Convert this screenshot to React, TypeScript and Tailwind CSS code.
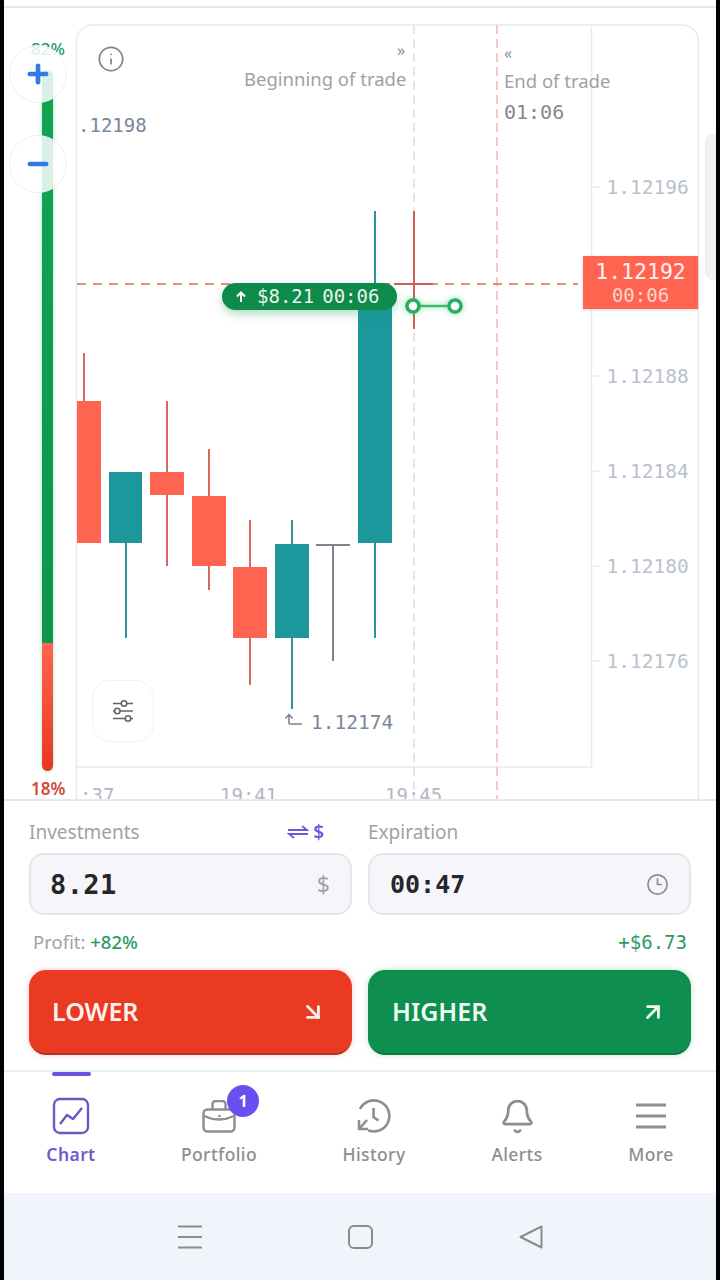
import { ArrowDownRight, ArrowUpRight, Bell, Clock3, Info, Plus, Minus } from "lucide-react";

const RED = "#ff6450";
const TEAL = "#1c979c";

// x, width, body top, body bottom, wick x, wick top, wick bottom
const candles = [
  { x: 77, w: 24, top: 401, bottom: 543, wx: 84, wt: 353, wb: 401, color: RED, wick: "#d9685a" },
  { x: 109, w: 33, top: 472, bottom: 543, wx: 126, wt: 543, wb: 638, color: TEAL, wick: "#2d9599" },
  { x: 150, w: 34, top: 472, bottom: 495, wx: 167, wt: 401, wb: 566, color: RED, wick: "#d9685a" },
  { x: 192, w: 34, top: 496, bottom: 566, wx: 209, wt: 449, wb: 590, color: RED, wick: "#d9685a" },
  { x: 233, w: 34, top: 567, bottom: 638, wx: 250, wt: 520, wb: 685, color: RED, wick: "#d9685a" },
  { x: 275, w: 34, top: 544, bottom: 638, wx: 292, wt: 520, wb: 709, color: TEAL, wick: "#2d9599" },
  { x: 358, w: 34, top: 300, bottom: 543, wx: 375, wt: 211, wb: 638, color: TEAL, wick: "#2d9599" },
];

const axisLabels = [
  { label: "1.12196", top: "top-[178px]" },
  { label: "1.12188", top: "top-[367px]" },
  { label: "1.12184", top: "top-[462px]" },
  { label: "1.12180", top: "top-[557px]" },
  { label: "1.12176", top: "top-[652px]" },
];

const sans = "font-['Noto_Sans',sans-serif]";
const mono = "font-['DejaVu_Sans_Mono',monospace]";

function ChartDrawing() {
  return (
    <svg className="absolute inset-0" width="720" height="800" viewBox="0 0 720 800" fill="none">
      <path d="M76.5 800V41a16 16 0 0 1 16-16h590a16 16 0 0 1 16 16V800" stroke="#e8e9ee" strokeWidth="1.5" />
      <path d="M591.5 25V767H77" stroke="#e9ebf1" strokeWidth="1.5" />
      {[187, 376, 471, 566, 661].map((y) => (
        <path key={y} d={`M592 ${y}h8`} stroke="#e9ebf1" strokeWidth="1.5" />
      ))}
      <path d="M414 25V800" stroke="#e6d9d9" strokeWidth="1.5" strokeDasharray="9 5" />
      <path d="M497 25V800" stroke="#f5b5ad" strokeWidth="1.5" strokeDasharray="9 5" />
      <path d="M77 284H578" stroke="#e2685a" strokeWidth="1.5" strokeDasharray="9 7" />
      {candles.map((c) => (
        <g key={c.x}>
          <path d={`M${c.wx} ${c.wt}V${c.wb}`} stroke={c.wick} strokeWidth="2" />
          <rect x={c.x} y={c.top} width={c.w} height={c.bottom - c.top} fill={c.color} />
        </g>
      ))}
      <path d="M316 545H350M333 545V661" stroke="#7f858f" strokeWidth="2" />
      <path d="M394 284H433M414 211V329" stroke="#d15f52" strokeWidth="2" />
      <g className="drop-shadow-[0_0_3px_rgba(60,200,120,0.6)]">
        <path d="M413 306H455" stroke="#3dbb6e" strokeWidth="2.5" />
        <circle cx="413" cy="306" r="6" fill="#fff" stroke="#27ae60" strokeWidth="3.5" />
        <circle cx="455" cy="306" r="6" fill="#fff" stroke="#27ae60" strokeWidth="3.5" />
      </g>
      <path d="M289 724V715M285.500 718.500L289 714.500L292.500 718.500M289 724H302" stroke="#7a8599" strokeWidth="1.6" />
    </svg>
  );
}

function SliderIcon() {
  return (
    <svg width="22" height="24" viewBox="0 0 22 24" fill="none" stroke="#5f6368" strokeWidth="1.6">
      <path d="M1 4.500H9M15 4.500H21M1 12H2.500M8 12H21M1 19.500H13M19 19.500H21" />
      <circle cx="12" cy="4.500" r="2.700" />
      <circle cx="5.300" cy="12" r="2.700" />
      <circle cx="16" cy="19.500" r="2.700" />
    </svg>
  );
}

function Chart() {
  return (
    <div className="relative h-[801px] w-full overflow-hidden border-b-2 border-[#e8e9ee]">
      <div className="absolute left-0 right-0 top-[6px] h-[2px] bg-[#e6e7ea]" />
      <ChartDrawing />

      {/* sentiment bar */}
      <div className="absolute left-[42px] top-[70px] flex h-[701px] w-[11px] flex-col overflow-hidden rounded-full shadow-[0_0_4px_rgba(60,220,130,0.5)]">
        <div className="h-[573px] bg-gradient-to-b from-[#12a453] to-[#0f954c]" />
        <div className="flex-1 bg-gradient-to-b from-[#ff6450] to-[#e8351f]" />
      </div>
      <span className={`absolute left-[31px] top-[40px] text-[17px] leading-none font-medium text-[#249a60] ${sans}`}>82%</span>
      <span className={`absolute left-[31px] top-[780px] text-[17px] leading-none font-semibold text-[#d6483b] ${sans}`}>18%</span>

      <button className="absolute left-[9px] top-[45px] flex h-[58px] w-[58px] items-center justify-center rounded-full border border-[#eef0f0] bg-white/85">
        <Plus size={28} strokeWidth={4} color="#2f7be8" />
      </button>
      <button className="absolute left-[9px] top-[135px] flex h-[58px] w-[58px] items-center justify-center rounded-full border border-[#eef0f0] bg-white/85">
        <Minus size={28} strokeWidth={4} color="#2f7be8" />
      </button>

      <Info className="absolute left-[97px] top-[45px]" size={28} strokeWidth={1.5} color="#858585" />

      <span className={`absolute left-[397px] top-[42px] text-[16px] leading-none text-[#8c8f96] ${sans}`}>»</span>
      <span className={`absolute left-[244px] top-[68px] text-[18.500px] leading-[22px] whitespace-nowrap text-[#9ea1a6] ${sans}`}>Beginning of trade</span>
      <span className={`absolute left-[504px] top-[45px] text-[16px] leading-none text-[#8c8f96] ${sans}`}>«</span>
      <span className={`absolute left-[504px] top-[70px] text-[18.500px] leading-[22px] whitespace-nowrap text-[#9ea1a6] ${sans}`}>End of trade</span>
      <span className={`absolute left-[504px] top-[102px] text-[20px] leading-none text-[#85888f] ${mono}`}>01:06</span>
      <span className={`absolute left-[78px] top-[116px] text-[19px] leading-none text-[#7b869a] ${mono}`}>.12198</span>

      {axisLabels.map((a) => (
        <span key={a.label} className={`absolute left-[606.500px] ${a.top} text-[19.500px] leading-none text-[#b9c1ce] ${mono}`}>{a.label}</span>
      ))}

      <span className={`absolute left-[311px] top-[713px] text-[19.500px] leading-none text-[#7b869a] ${mono}`}>1.12174</span>

      <div className={`absolute left-[80px] top-[786px] text-[19px] leading-none text-[#b2b8c4] ${mono}`}>:37</div>
      <div className={`absolute left-[220px] top-[786px] text-[19px] leading-none text-[#b2b8c4] ${mono}`}>19:41</div>
      <div className={`absolute left-[385px] top-[786px] text-[19px] leading-none text-[#b2b8c4] ${mono}`}>19:45</div>

      <button className="absolute left-[92px] top-[680px] flex h-[62px] w-[62px] items-center justify-center rounded-[18px] border border-[#f0f1f3] bg-white">
        <SliderIcon />
      </button>

      {/* open trade pill */}
      <div className={`absolute left-[222px] top-[283px] flex h-[27px] w-[175px] items-center rounded-full bg-[#0f8a4b] pl-[13px] text-[19px] leading-none whitespace-nowrap text-[#e6f5ec] shadow-[0_4px_10px_rgba(16,160,90,0.35)] ${mono}`}>
        <svg width="12" height="12" viewBox="0 0 12 12" fill="none" stroke="#fff" strokeWidth="2" className="mr-[10px]">
          <path d="M6 11V2M2 5.500L6 1.500L10 5.500" />
        </svg>
        <span>$8.21</span>
        <span className="ml-[8px]">00:06</span>
      </div>

      {/* current price */}
      <div className={`absolute left-[583px] top-[256px] flex h-[53px] w-[115px] flex-col items-center justify-center bg-[#ff6450] shadow-[0_1px_3px_rgba(0,0,0,0.15)] ${mono}`}>
        <span className="text-[21.500px] leading-[25px] text-[#fff1ee]">1.12192</span>
        <span className="text-[19px] leading-[22px] text-[#ffd5cd]">00:06</span>
      </div>

      <div className="absolute left-[705px] top-[134px] h-[146px] w-[11px] rounded-l-[9px] border border-r-0 border-[#e9e9ec] bg-[#f2f2f3]" />
    </div>
  );
}

function SwapIcon() {
  return (
    <svg width="22" height="14" viewBox="0 0 22 14" fill="none" stroke="#6d5ad6" strokeWidth="1.8">
      <path d="M1 5H20L15 1" />
      <path d="M21 9H2L7 13" />
    </svg>
  );
}

function Form() {
  return (
    <div className="pl-[25px] pt-[19px]">
      <div className="grid grid-cols-[323px_323px] gap-x-[16px]">
        <div className="flex h-[24px] items-center justify-between pr-[28px]">
          <span className={`text-[19px] leading-none text-[#a0a2a8] ${sans}`}>Investments</span>
          <span className="flex items-center gap-[4px]">
            <SwapIcon />
            <span className={`text-[19px] leading-none font-semibold text-[#6d5ad6] ${sans}`}>$</span>
          </span>
        </div>
        <div className="flex h-[24px] items-center">
          <span className={`text-[19px] leading-none text-[#a0a2a8] ${sans}`}>Expiration</span>
        </div>

        <div className="mt-[9px] flex h-[62px] items-center justify-between rounded-[15px] border-2 border-[#e5e5ea] bg-[#f6f6fa] pl-[19px] pr-[20px]">
          <span className={`text-[27px] leading-none font-bold tracking-[0.4px] text-[#25272b] ${mono}`}>8.21</span>
          <span className={`text-[23px] leading-none text-[#a0a2a8] ${sans}`}>$</span>
        </div>
        <div className="mt-[9px] flex h-[62px] items-center justify-between rounded-[15px] border-2 border-[#e5e5ea] bg-[#f6f6fa] pl-[20px] pr-[20px]">
          <span className={`text-[25px] leading-none font-bold text-[#25272b] ${mono}`}>00:47</span>
          <Clock3 size={23} strokeWidth={1.8} color="#8d8f93" />
        </div>

        <div className={`mt-[15px] flex h-[24px] items-center pl-[4px] text-[18.500px] leading-none text-[#a0a2a8] ${sans}`}>
          Profit:&nbsp;<span className="font-medium text-[#2c9a5f]">+82%</span>
        </div>
        <div className="mt-[15px] flex h-[24px] items-center justify-end pr-[4px]">
          <span className={`text-[19px] leading-none font-medium text-[#2c9a5f] ${mono}`}>+$6.73</span>
        </div>

        <button className="mt-[16px] flex h-[85px] items-center justify-between rounded-[17px] border-b-2 border-[#a8392a] bg-[#ea3a22] pl-[23px] pr-[26px] shadow-[0_0_6px_rgba(234,58,34,0.25)]">
          <span className={`text-[25px] leading-none font-semibold text-[#fdf1ee] ${sans}`}>LOWER</span>
          <ArrowDownRight size={26} strokeWidth={2.6} color="#fdf1ee" />
        </button>
        <button className="mt-[16px] flex h-[85px] items-center justify-between rounded-[17px] border-b-2 border-[#0f7a44] bg-[#0f8f4f] pl-[24px] pr-[25px] shadow-[0_0_6px_rgba(15,143,79,0.25)]">
          <span className={`text-[25px] leading-none font-semibold text-[#effaf3] ${sans}`}>HIGHER</span>
          <ArrowUpRight size={26} strokeWidth={2.6} color="#effaf3" />
        </button>
      </div>
    </div>
  );
}

function NavItem({ label, active, children }: { label: string; active?: boolean; children: React.ReactNode }) {
  return (
    <div className="flex flex-col items-center">
      <div className="relative flex h-[38px] items-center justify-center">{children}</div>
      <span className={`mt-[7px] text-[17.500px] leading-[24px] tracking-[0.4px] ${sans} ${active ? "font-semibold text-[#6f5bd0]" : "font-medium text-[#8e8e90]"}`}>
        {label}
      </span>
    </div>
  );
}

function BottomNav() {
  return (
    <div className="relative mt-[15px] h-[123px] border-t-2 border-[#ececf0]">
      <div className="absolute left-[48px] top-0 h-[4px] w-[39px] rounded-full bg-[#6a4fe0]" />
      <div className="grid grid-cols-[134px_162px_148px_138px_130px] pt-[25px]">
        <NavItem label="Chart" active>
          <svg width="38" height="38" viewBox="0 0 38 38" fill="none" stroke="#6a58c8" strokeWidth="2.4">
            <rect x="2" y="2" width="34" height="34" rx="6" />
            <path d="M8 27L15 18L21 22L30 11" strokeLinejoin="round" />
          </svg>
        </NavItem>
        <NavItem label="Portfolio">
          <svg width="34" height="33" viewBox="0 0 34 33" fill="none" stroke="#8e8e90" strokeWidth="2.4">
            <rect x="1.500" y="9.500" width="31" height="22" rx="4" />
            <path d="M10.500 9V4a3 3 0 0 1 3-3h7a3 3 0 0 1 3 3V9" />
            <path d="M2 16Q17 23 32 16" />
            <circle cx="17.500" cy="16" r="1.300" fill="#8e8e90" stroke="none" />
          </svg>
          <span className={`absolute left-[25px] top-[-12px] flex h-[32px] w-[32px] items-center justify-center rounded-full bg-[#6a4ff0] text-[16px] font-bold text-white ${sans}`}>1</span>
        </NavItem>
        <NavItem label="History">
          <svg width="38" height="38" viewBox="0 0 38 38" fill="none" stroke="#8e8e90" strokeWidth="2.6">
            <path d="M5 12A15.500 15.500 0 1 1 13 33.300" />
            <path d="M4 23V32H13M4 32L12 23" />
            <path d="M18.500 11V20L23.500 23.500" />
          </svg>
        </NavItem>
        <NavItem label="Alerts">
          <Bell size={37} strokeWidth={1.8} color="#8e8e90" />
        </NavItem>
        <NavItem label="More">
          <svg width="32" height="28" viewBox="0 0 32 28" fill="none" stroke="#8e8e90" strokeWidth="2.8">
            <path d="M1 3H31M1 14H31M1 25H31" />
          </svg>
        </NavItem>
      </div>
    </div>
  );
}

function SystemBar() {
  return (
    <div className="flex h-[87px] items-center bg-[#f1f4fa] pl-[174px] pr-[177px]">
      <div className="flex w-full items-center justify-between">
        <svg width="24" height="24" viewBox="0 0 24 24" fill="none" stroke="#8b8b8b" strokeWidth="1.8">
          <path d="M0 1.500H24M0 12H24M0 22.500H24" />
        </svg>
        <svg width="25" height="24" viewBox="0 0 25 24" fill="none" stroke="#8b8b8b" strokeWidth="2">
          <rect x="1" y="1" width="23" height="22" rx="5" />
        </svg>
        <svg width="24" height="24" viewBox="0 0 24 24" fill="none" stroke="#8b8b8b" strokeWidth="2" strokeLinejoin="round">
          <path d="M22.500 1.500V22.500L1.500 12Z" />
        </svg>
      </div>
    </div>
  );
}

export default function App() {
  return (
    <div className="flex h-[1280px] w-[720px] overflow-hidden bg-black">
      <div className="w-[4px] shrink-0 bg-black" />
      <div className="relative w-[712px] shrink-0 overflow-hidden bg-white">
        <div className="relative left-[-4px] w-[720px]">
          <Chart />
          <div className="w-[720px] pl-[4px]">
            <Form />
            <BottomNav />
            <SystemBar />
          </div>
        </div>
      </div>
      <div className="w-[4px] shrink-0 bg-black" />
    </div>
  );
}
